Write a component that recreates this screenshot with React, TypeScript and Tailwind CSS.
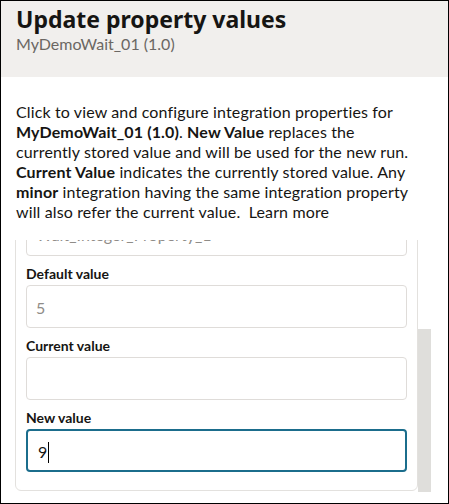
import React, { useEffect, useRef } from 'react';

interface FieldProps {
  label: string;
  value?: string;
  muted?: boolean;
  focused?: boolean;
  raised?: boolean;
}

const Field: React.FC<FieldProps> = ({ label, value, muted, focused, raised }) => (
  <div className="mt-[9px]">
    <div className="text-[14px] leading-[18px] font-bold text-[#161513] mb-[2px]">{label}</div>
    {focused ? (
      <div className="h-[43px] border-2 border-[#1b6d8c] rounded-[4px] pl-[10px] pt-[3px] flex items-center text-[16px] text-[#161513]">
        <span>{value}</span>
        <span className="inline-block w-px h-[21px] bg-black ml-[1px]" />
      </div>
    ) : (
      <div
        className={`h-[43px] border border-[#dfdcd9] rounded-[4px] pl-[9px] flex items-center text-[16px] ${
          raised ? 'pt-0' : 'pt-[3px]'
        } ${muted ? 'text-[#8f8c88]' : 'text-[#161513]'}`}
      >
        {value}
      </div>
    )}
  </div>
);

const App: React.FC = () => {
  const scrollRef = useRef<HTMLDivElement>(null);

  useEffect(() => {
    const el = scrollRef.current;
    if (el) el.scrollTop = el.scrollHeight; // dialog is scrolled to the last field
  }, []);

  return (
    <div className="w-[449px] h-[504px] border border-black bg-white font-['Lato',sans-serif] overflow-hidden">
      <div className="h-[76px] bg-[#f1efed] pl-[15px] pt-[4px]">
        <h1 className="font-['Noto_Sans',sans-serif] text-[23px] leading-[28px] font-bold text-[#161513]">
          Update property values
        </h1>
        <p className="text-[16px] leading-[20px] mt-[1px] text-[#6b6763]">MyDemoWait_01 (1.0)</p>
      </div>

      <div className="pl-[15px] pr-[10px] pt-[25px] text-[16px] leading-[20px] tracking-[0.13px] text-[#161513]">
        <p>Click to view and configure integration properties for</p>
        <p>
          <b>MyDemoWait_01 (1.0)</b>. <b>New Value</b> replaces the
        </p>
        <p>currently stored value and will be used for the new run.</p>
        <p>
          <b>Current Value</b> indicates the currently stored value. Any
        </p>
        <p>
          <b>minor</b> integration having the same integration property
        </p>
        <p>will also refer the current value.&nbsp; Learn more</p>
      </div>

      <div className="mt-[18px] ml-[14px] w-[416px] h-[252px] flex">
        <div ref={scrollRef} className="w-[403px] h-full overflow-hidden">
          <div className="border border-[#e3e1de] rounded-[6px] px-[10px] pt-[8px] pb-[18px] mb-[1px]">
            <Field label="Name" value="WaitTime" muted />
            <Field label="Property name" value="Wait_Integer_Property_1" muted raised />
            <Field label="Default value" value="5" muted />
            <Field label="Current value" value="" />
            <Field label="New value" value="9" focused />
          </div>
        </div>
        {/* scrollbar */}
        <div className="w-[13px] h-full flex flex-col">
          <div className="flex-1" />
          <div className="h-[163px] bg-[#dfdedb]" />
        </div>
      </div>
    </div>
  );
};

export default App;
